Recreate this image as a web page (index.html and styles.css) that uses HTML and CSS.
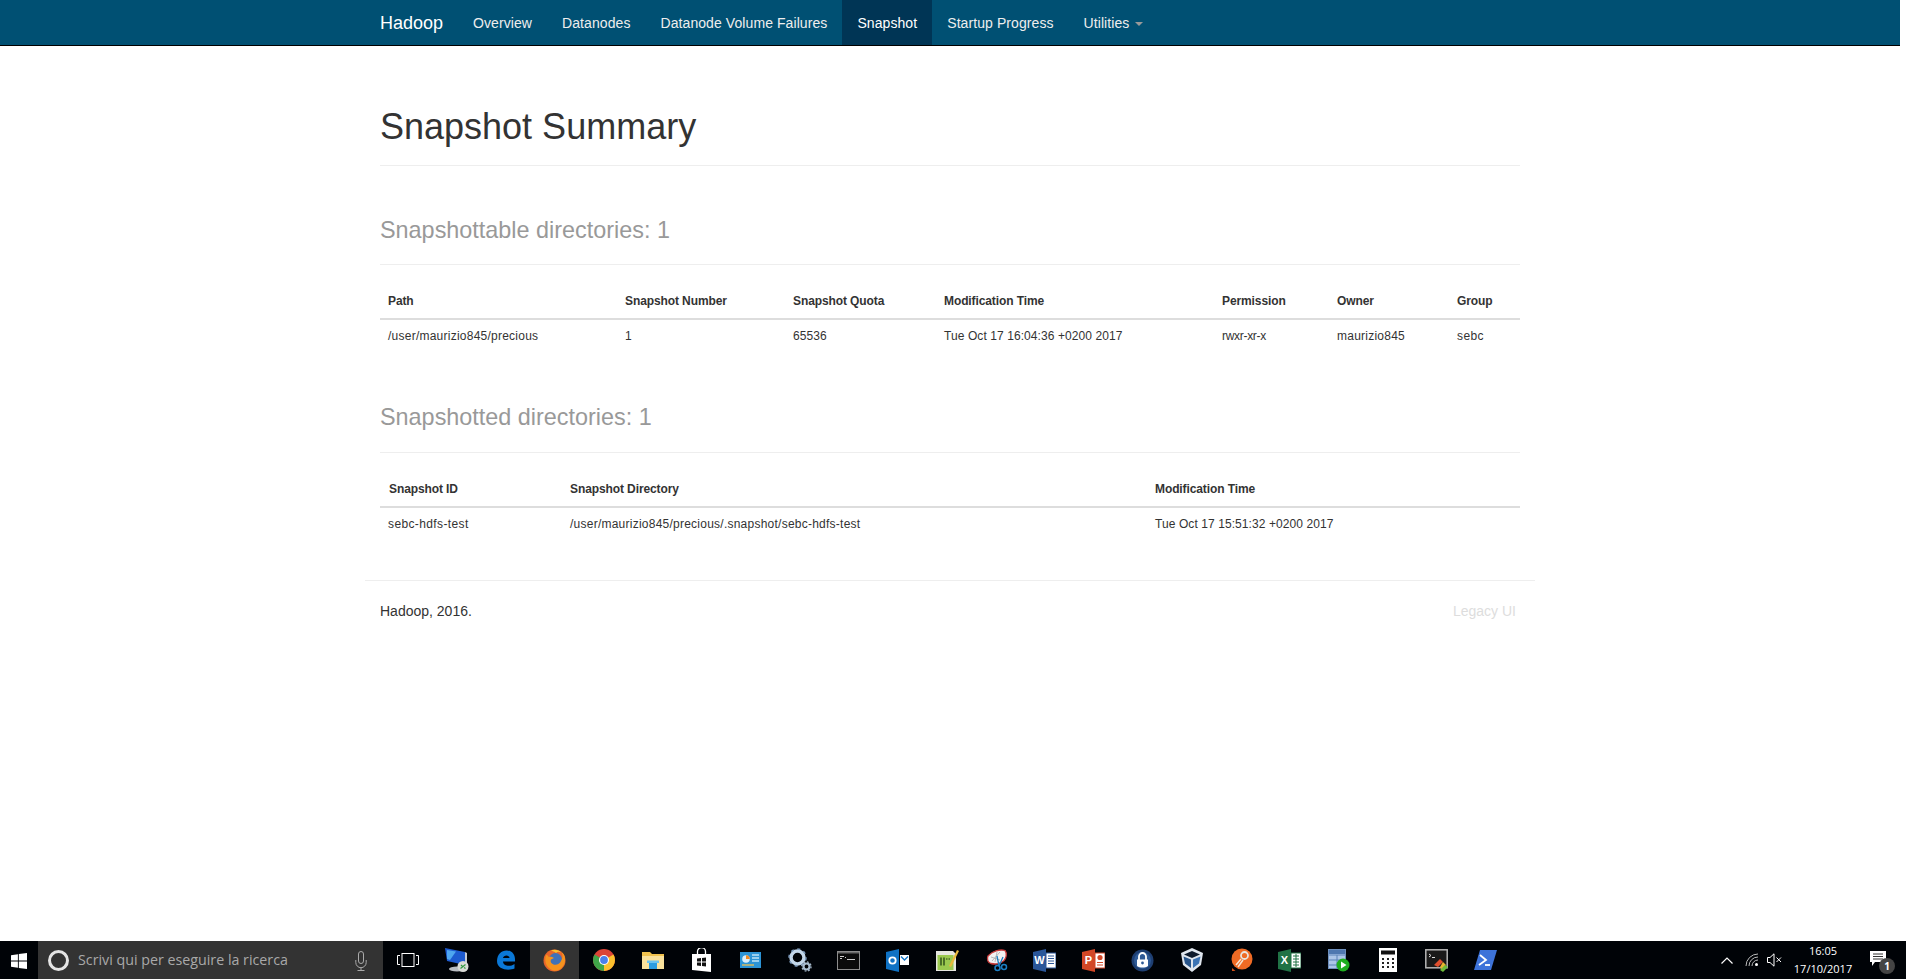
FILE: index.html
```html
<!DOCTYPE html>
<html lang="en">
<head>
<meta charset="utf-8">
<title>Snapshot Summary</title>
<link rel="stylesheet" href="styles.css">
</head>
<body>
<div class="viewport">
  <nav class="navbar">
    <div class="container nav-inner">
      <a class="brand">Hadoop</a>
      <ul class="nav">
        <li><a>Overview</a></li>
        <li><a>Datanodes</a></li>
        <li><a>Datanode Volume Failures</a></li>
        <li class="active"><a>Snapshot</a></li>
        <li><a>Startup Progress</a></li>
        <li><a>Utilities <b class="caret"></b></a></li>
      </ul>
    </div>
  </nav>
  <main class="container content">
    <div class="page-header page-title"><h1>Snapshot Summary</h1></div>
    <div class="page-header"><h1><small>Snapshottable directories: 1</small></h1></div>
    <table class="table">
      <colgroup><col class="c237"><col class="c168"><col class="c151"><col class="c278"><col class="c115"><col class="c120"><col class="c71"></colgroup>
      <thead><tr><th>Path</th><th>Snapshot Number</th><th>Snapshot Quota</th><th>Modification Time</th><th>Permission</th><th>Owner</th><th>Group</th></tr></thead>
      <tbody><tr><td>/user/maurizio845/precious</td><td class="num">1</td><td class="num">65536</td><td class="num">Tue Oct 17 16:04:36 +0200 2017</td><td class="perm">rwxr-xr-x</td><td>maurizio845</td><td class="wide">sebc</td></tr></tbody>
    </table>
    <div class="page-header"><h1><small>Snapshotted directories: 1</small></h1></div>
    <table class="table table-second">
      <colgroup><col class="c182"><col class="c585"><col class="c373"></colgroup>
      <thead><tr><th>Snapshot ID</th><th>Snapshot Directory</th><th>Modification Time</th></tr></thead>
      <tbody><tr><td class="wide">sebc-hdfs-test</td><td>/user/maurizio845/precious/.snapshot/sebc-hdfs-test</td><td class="num">Tue Oct 17 15:51:32 +0200 2017</td></tr></tbody>
    </table>
    <footer class="footer">
      <p>Hadoop, 2016.</p>
      <a class="legacy">Legacy UI</a>
    </footer>
  </main>
</div>
<div class="taskbar">
  <div class="start">
    <svg width="16" height="16" viewBox="0 0 16 16"><path fill="#fff" d="M0 2.2 6.9 1.2V7.5H0ZM7.8 1.1 16 0V7.5H7.8ZM0 8.4H6.9V14.8L0 13.8ZM7.8 8.4H16V16L7.8 14.9Z"/></svg>
  </div>
  <div class="search">
    <span class="cortana"></span>
    <span class="search-text">Scrivi qui per eseguire la ricerca</span>
    <svg class="mic" width="12" height="20" viewBox="0 0 12 20"><rect x="3.5" y=".5" width="5" height="12" rx="2.5" fill="none" stroke="#aaa"/><path d="M.8 9v2.5a5.2 5.2 0 0 0 10.4 0V9M6 17v2.5M2.5 19.5h7" fill="none" stroke="#aaa"/></svg>
  </div>
  <div class="tiles">
    <div class="tile"><svg width="22" height="14" viewBox="0 0 22 14"><rect x="5" y=".5" width="12" height="13" fill="none" stroke="#fff"/><path d="M3 2.5H.5v9H3M19 2.5h2.5v9H19" fill="none" stroke="#fff"/></svg></div>
    <div class="tile"><svg width="26" height="26" viewBox="0 0 26 26"><path d="M1 1 21 5v13L3 14Z" fill="#1d5bd0"/><path d="M3 3 12 4.500 6 13 3 12Z" fill="#4ea7f0"/><path d="M21 5v13l2-1V6Z" fill="#c5cbd3"/><ellipse cx="13" cy="22" rx="8" ry="2.500" fill="#b8bcc2"/><circle cx="19" cy="19.500" r="5.500" fill="#d8dad6"/><path d="M16.500 21.500 21.500 17.500M17 18l1.500 1.500M20 20.500l1.500 1" stroke="#2f9a3f" stroke-width="1.200"/></svg></div>
    <div class="tile"><svg width="20" height="20" viewBox="0 0 20 20"><path fill="#0a78d7" d="M1 11C1 4.500 5.500.5 10.500.5 16 .500 19.500 4.500 19 11.500H7c.3 5 7.500 5.500 11.500 2.500v4.500C13 21 1 20 1 11ZM7 8h6.500C13.500 4.500 7.500 4.500 7 8Z"/></svg></div>
    <div class="tile hot"><svg width="23" height="23" viewBox="0 0 23 23"><circle cx="11.500" cy="11.500" r="11" fill="#e8662a"/><circle cx="12.500" cy="10.500" r="6.500" fill="#3f72b8"/><path d="M3 6C1 12 3 19 10 21.500c6 1 11-3 12-9.500.5-4-1-7.500-3.500-9 1.500 3 1.500 6-.5 9-1 2.500-4.500 4.500-7.500 3.500-2.500-1-3.500-3-2.500-5l3-1.500c-2-1.500-4-1.500-5.500-1C5.500 6.500 4 6 3 6Z" fill="#f5931e"/><path d="M8 1.500c4-1.500 8-.5 10 2-2-1-3.500-1-5 .5-1.500-1.500-3.500-2-5-2.500Z" fill="#f9c22e"/></svg></div>
    <div class="tile"><svg width="22" height="22" viewBox="0 0 22 22"><circle cx="11" cy="11" r="11" fill="#db4437"/><path d="M11 11 20.500 5.500A11 11 0 0 1 11 22Z" fill="#fbc02d"/><path d="M11 11 11 22A11 11 0 0 1 1.500 5.500Z" fill="#3fa548"/><circle cx="11" cy="11" r="5" fill="#fff"/><circle cx="11" cy="11" r="3.900" fill="#4a80ec"/></svg></div>
    <div class="tile"><svg width="22" height="18" viewBox="0 0 22 18"><path d="M0 1h8l2 2h12v15H0Z" fill="#f0c24e"/><path d="M0 5h22v13H0Z" fill="#fae29c"/><rect x="7" y="11" width="8" height="7" fill="#2d9de0"/><rect x="5" y="9.500" width="12" height="2.500" fill="#6cc3ef"/></svg></div>
    <div class="tile"><svg width="21" height="24" viewBox="0 0 21 24"><path d="M6.500 6V3.500a4 4 0 0 1 8 0V6" fill="none" stroke="#fff" stroke-width="1.300"/><path d="M1 6h19v18L1 22Z" fill="#fff"/><path d="M6 10.500 10 10v3.500H6ZM11 10l4-.5v4h-4ZM6 14.500h4V18l-4-.5ZM11 14.500h4V18.500L11 18Z" fill="#111"/></svg></div>
    <div class="tile"><svg width="21" height="16" viewBox="0 0 21 16"><rect width="21" height="16" fill="#2c94d6"/><circle cx="6" cy="7" r="3.800" fill="#dceffa"/><path d="M6 7V3.200A3.800 3.800 0 0 1 9.800 7Z" fill="#f08a24"/><path d="M12 3h7M12 6h7M12 9h7" stroke="#bfe3f7" stroke-width="1.300"/><path d="M2 13h12" stroke="#f2c14e" stroke-width="1.300"/></svg></div>
    <div class="tile"><svg width="24" height="24" viewBox="0 0 24 24"><circle cx="9.500" cy="9.500" r="6.500" fill="none" stroke="#c3d7ea" stroke-width="3.500"/><circle cx="9.500" cy="9.500" r="8.500" fill="none" stroke="#7f9ec0" stroke-width="1.500" stroke-dasharray="3 3.600"/><circle cx="18.500" cy="18.500" r="3" fill="none" stroke="#a9bdd0" stroke-width="2.200"/><circle cx="18.500" cy="18.500" r="4.600" fill="none" stroke="#a9bdd0" stroke-width="1.200" stroke-dasharray="1.800 1.800"/></svg></div>
    <div class="tile"><svg width="23" height="19" viewBox="0 0 23 19"><rect x=".5" y=".5" width="22" height="18" fill="#0b0b0b" stroke="#8c8c8c"/><rect x="1" y="1" width="21" height="1.500" fill="#666"/><path d="M3 5.500h4M3 7.500h2M8 6.500h1M10 8.500h8" stroke="#ccc"/></svg></div>
    <div class="tile"><svg width="23" height="23" viewBox="0 0 23 23"><path d="M0 3 13 0v23L0 20Z" fill="#0f72c4"/><path d="M14 6h9v10h-9Z" fill="#fff"/><path d="M15 7.500 18.500 11 22 7.500" fill="none" stroke="#0f72c4" stroke-width="1.300"/><circle cx="6.500" cy="11.500" r="3.200" fill="none" stroke="#fff" stroke-width="1.800"/></svg></div>
    <div class="tile"><svg width="24" height="24" viewBox="0 0 24 24"><path d="M1 3h17l3 3v17H1Z" fill="#e6e6e0"/><rect x="2.500" y="7" width="16" height="15" fill="#9bc94f"/><path d="M6 9.500v8M9 9.500v8" stroke="#1f3d13" stroke-width="1.300"/><path d="M11 11h1.500M13.500 11H15" stroke="#1f3d13"/><path d="M14 18 22 2l2 1-8 16Z" fill="#e9b93c"/></svg></div>
    <div class="tile"><svg width="24" height="24" viewBox="0 0 24 24"><path d="M4 8C8 3 16 1 21 2.500c2.500 3 1 8-1 10-4 3.500-9 4-13 3-3-1-4.500-4-3-7.500Z" fill="#f2f2f2" stroke="#c83a3a" stroke-width="1.300"/><path d="M8 13 16 4M11 14 13 4M7 9l9 3" stroke="#aaa" stroke-width=".8"/><circle cx="13.500" cy="20" r="2.500" fill="none" stroke="#1b7fc4" stroke-width="1.500"/><circle cx="20" cy="19" r="2.500" fill="none" stroke="#1b7fc4" stroke-width="1.500"/><path d="M13 8 15 18M19 9 15 18" stroke="#1b7fc4" stroke-width="1.300"/></svg></div>
    <div class="tile"><svg width="23" height="23" viewBox="0 0 23 23"><path d="M0 3 13 0v23L0 20Z" fill="#2a5699"/><rect x="13" y="4" width="10" height="15" fill="#fff" stroke="#2a5699"/><path d="M15 7h6M15 9.500h6M15 12h6M15 14.500h6" stroke="#2a5699"/><text class="office" x="6.500" y="15">W</text></svg></div>
    <div class="tile"><svg width="23" height="23" viewBox="0 0 23 23"><path d="M0 3 13 0v23L0 20Z" fill="#d24726"/><rect x="13" y="4" width="10" height="15" fill="#fff" stroke="#d24726"/><circle cx="18" cy="8.500" r="2.600" fill="#d24726"/><path d="M15 13.500h6M15 16h6" stroke="#d24726"/><text class="office" x="6.500" y="15">P</text></svg></div>
    <div class="tile"><svg width="23" height="23" viewBox="0 0 23 23"><circle cx="11.500" cy="11.500" r="11" fill="#1e3f72"/><circle cx="11.500" cy="11.500" r="8.500" fill="#2e5a96"/><path d="M8 11V7.500a3.500 3.500 0 0 1 7 0V11" fill="none" stroke="#fff" stroke-width="1.800"/><path d="M6 10.500h11V17c-3 2-8 2-11 0Z" fill="#fff"/><circle cx="11.500" cy="14" r="1.400" fill="#2e5a96"/></svg></div>
    <div class="tile"><svg width="22" height="24" viewBox="0 0 22 24"><path d="M11 0 22 5 20 17 11 24 2 17 0 5Z" fill="#dfe6ee"/><path d="M11 3 19 6.500 11 10 3 6.500Z" fill="#0d1a2c"/><path d="M2.500 8.500 10 11.500V20L4 15.500Z" fill="#27548a"/><path d="M19.500 8.500 12 11.500V20L18 15.500Z" fill="#3c74b5"/></svg></div>
    <div class="tile"><svg width="24" height="24" viewBox="0 0 24 24"><circle cx="13" cy="11" r="10.500" fill="#ef6b25"/><path d="M3 23h3.500L3 20Z" fill="#d0501a"/><path d="M7 17 12 11M9 19l5-7" stroke="#f6e4d2" stroke-width="1.500"/><circle cx="15.500" cy="7.500" r="3.500" fill="none" stroke="#e8e4df" stroke-width="1.800"/></svg></div>
    <div class="tile"><svg width="23" height="23" viewBox="0 0 23 23"><path d="M0 3 13 0v23L0 20Z" fill="#207245"/><rect x="13" y="4" width="10" height="15" fill="#fff" stroke="#207245"/><path d="M15 7h6M15 10h6M15 13h6M15 16h6M18 5v13" stroke="#207245"/><text class="office" x="6.500" y="15">X</text></svg></div>
    <div class="tile"><svg width="22" height="23" viewBox="0 0 22 23"><rect x=".5" y=".5" width="17" height="19" fill="#adc6e8" stroke="#6d8fbd"/><path d="M1 6h16M1 11h16M1 16h16M9 6v13" stroke="#5b82b8"/><rect x="1" y="1" width="16" height="4" fill="#4f78b0"/><circle cx="15" cy="16" r="6.500" fill="#1fae1f"/><path d="M13 12.500v7l5.500-3.500Z" fill="#fff"/></svg></div>
    <div class="tile"><svg width="18" height="24" viewBox="0 0 18 24"><rect width="18" height="24" fill="#fff"/><rect x="2" y="2.500" width="14" height="4" fill="#111"/><path d="M3 10h2v2H3ZM8 10h2v2H8ZM13 10h2v2h-2ZM3 14h2v2H3ZM8 14h2v2H8ZM13 14h2v2h-2ZM3 18h2v2H3ZM8 18h2v2H8ZM13 18h2v2h-2Z" fill="#222"/></svg></div>
    <div class="tile"><svg width="24" height="23" viewBox="0 0 24 23"><rect x=".8" y=".8" width="21.400" height="18" fill="#1a1a1a" stroke="#b5b5b5" stroke-width="1.500"/><path d="M4 5l2 1.500L4 8M7 8.500h3" stroke="#ddd" fill="none"/><path d="M9 16 15 10l3 3-5 5Z" fill="#e04f2e"/><path d="M15 18l3-5 3 3-4 5Z" fill="#e8b52f"/><path d="M15 21l5-5 3 2-5 5Z" fill="#6dbb3a"/></svg></div>
    <div class="tile"><svg width="23" height="20" viewBox="0 0 23 20"><path d="M6 0H23L17 20H0Z" fill="#3d73d9"/><path d="M6 5 12 10 5 15" fill="none" stroke="#fff" stroke-width="1.800"/><path d="M11 15h5" stroke="#fff" stroke-width="1.800"/></svg></div>
  </div>
  <div class="tray">
    <svg class="chev" width="12" height="7" viewBox="0 0 12 7"><path d="M.5 6.500 6 1l5.500 5.500" fill="none" stroke="#fff" stroke-width="1.200"/></svg>
    <svg class="wifi" width="14" height="14" viewBox="0 0 14 14"><path d="M1 13A12 12 0 0 1 13 1M4 13a9 9 0 0 1 9-9M7 13a6 6 0 0 1 6-6" fill="none" stroke="#bbb"/><circle cx="11.500" cy="11.500" r="1.500" fill="#fff"/></svg>
    <svg class="vol" width="15" height="14" viewBox="0 0 15 14"><path d="M.5 4.500H3L7 .8v12.400L3 9.500H.5Z" fill="none" stroke="#fff"/><path d="M9.500 4.500l4.500 4.500M14 4.500 9.500 9" stroke="#fff"/></svg>
    <div class="clock"><span>16:05</span><span>17/10/2017</span></div>
    <div class="notif">
      <svg width="16" height="15" viewBox="0 0 16 15"><path d="M0 0h16v11H5l-3 4v-4H0Z" fill="#fff"/><path d="M3 3h10M3 5.500h10M3 8h10" stroke="#333"/></svg>
      <span class="badge">1</span>
    </div>
  </div>
</div>
</body>
</html>
```

FILE: styles.css
```css
* { box-sizing: border-box; }
html, body { height: 100%; margin: 0; }
body {
  display: flex;
  flex-direction: column;
  overflow: hidden;
  font-family: "Liberation Sans", Arial, sans-serif;
  font-size: 14px;
  line-height: 1.42857;
  color: #333;
  background: #fff;
}
.viewport { flex: 1; min-height: 0; padding-right: 6px; }
.container { width: 1170px; margin: 0 auto; padding: 0 15px; }

.navbar { height: 46px; background: #005073; border-bottom: 1px solid #000; }
.nav-inner { display: flex; }
.brand { font-size: 18px; line-height: 20px; padding: 12.5px 15px 12.5px 0; color: #fff; }
.nav { display: flex; list-style: none; margin: 0; padding: 0; letter-spacing: .08px; }
.nav a { display: block; padding: 12.5px 15px; line-height: 20px; color: #eee; }
.nav .active a { background: #003555; color: #fff; }
.caret {
  display: inline-block;
  width: 0;
  height: 0;
  margin-left: 2px;
  vertical-align: middle;
  border-top: 4px solid #999;
  border-left: 4px solid transparent;
  border-right: 4px solid transparent;
}

.content { padding-top: 20px; }
.page-header { margin: 40px 0 20px; padding-bottom: 9px; border-bottom: 1px solid #eee; }
h1 { margin: 20px 0 10px; font-size: 36px; font-weight: 500; line-height: 1.1; color: #333; }
.page-title h1 { padding-top: 1px; margin-bottom: 9px; }
small { font-size: 65%; font-weight: 400; line-height: 1; color: #999; }

.table { width: 100%; table-layout: fixed; border-collapse: collapse; margin-bottom: 20px; font-size: 12px; }
th, td { padding: 8px; text-align: left; line-height: 1.42857; }
th { font-weight: 700; letter-spacing: -.1px; border-bottom: 2px solid #ddd; }
td { letter-spacing: .24px; }
td.num { letter-spacing: .08px; }
td.perm { letter-spacing: -.3px; }
td.wide { letter-spacing: .38px; }
.table-second th:first-child { padding-left: 9px; }
.c237 { width: 237px; } .c168 { width: 168px; } .c151 { width: 151px; } .c278 { width: 278px; }
.c115 { width: 115px; } .c120 { width: 120px; } .c71 { width: 71px; }
.c182 { width: 182px; } .c585 { width: 585px; } .c373 { width: 373px; }

.footer {
  display: flex;
  justify-content: space-between;
  margin: 39px -15px 0;
  padding: 21px 19px 0 15px;
  border-top: 1px solid #eee;
}
.footer p { margin: 0; }
.legacy { color: #ddd; }

.taskbar { flex: none; height: 38px; display: flex; align-items: stretch; background: #000307; }
.start { width: 38px; display: flex; align-items: center; justify-content: center; padding-top: 2px; }
.search { width: 345px; display: flex; align-items: center; background: #333; padding: 1px 16px 0 10px; }
.cortana { width: 21px; height: 21px; border: 3px solid #e4e4e4; border-radius: 50%; flex: none; }
.search-text { flex: 1; margin-left: 9px; font-family: "Open Sans", sans-serif; font-size: 14.25px; color: #a9a9a9; white-space: nowrap; }
.tiles { display: flex; }
.tile { width: 49px; display: flex; align-items: center; justify-content: center; }
.tile.hot { background: #333; }
.office { font: 700 11px "Liberation Sans", sans-serif; fill: #fff; text-anchor: middle; }
.tray { margin-left: auto; width: 226px; display: flex; align-items: center; padding-left: 41px; color: #fff; }
.chev { margin-top: 1px; }
.wifi { margin-left: 12px; }
.vol { margin-left: 8px; }
.clock {
  margin-left: 1px;
  width: 80px;
  display: flex;
  flex-direction: column;
  align-items: center;
  font-family: "Open Sans", sans-serif;
  font-size: 11px;
  line-height: 18px;
}
.notif { position: relative; margin-left: 7px; width: 16px; height: 15px; margin-top: -3px; }
.notif svg { display: block; }
.badge {
  position: absolute;
  left: 9px;
  top: 7px;
  width: 16px;
  height: 16px;
  border-radius: 50%;
  background: #444;
  font: 700 10px/16px "Open Sans", sans-serif;
  text-align: center;
  color: #fff;
}
```
